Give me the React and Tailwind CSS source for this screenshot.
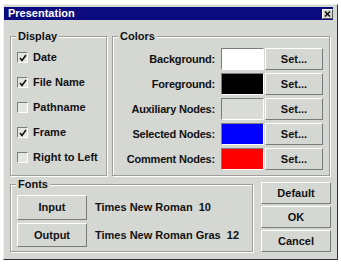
import React from "react";

const font = { fontFamily: '"Liberation Sans", Arial, sans-serif' };

function Check({ checked }) {
  return (
    <span className="w-[11px] h-[11px] bg-[#e4e6e2] border border-t-[#7c7c7c] border-l-[#7c7c7c] border-r-white border-b-white flex items-center justify-center">
      {checked && (
        <svg width="8" height="8" viewBox="0 0 8 8">
          <path d="M1 4 L3 6.5 L7 1" stroke="#111" strokeWidth="1.6" fill="none" />
        </svg>
      )}
    </span>
  );
}

function Btn({ children, className = "" }) {
  return (
    <button
      className={
        "bg-[#d5d7d3] border border-t-white border-l-white border-r-[#7a7a7a] border-b-[#7a7a7a] text-[11px] font-bold text-[#111] flex items-center justify-center " +
        className
      }
    >
      {children}
    </button>
  );
}

function Group({ label, className = "", children }) {
  return (
    <div
      className={
        "relative border border-[#9c9e9a] shadow-[1px_1px_0_#ffffff,inset_1px_1px_0_#ffffff] " +
        className
      }
    >
      <span className="absolute -top-[8px] left-[5px] px-[2px] bg-[#d5d7d3] text-[11px] font-bold text-[#111] leading-[14px]">
        {label}
      </span>
      {children}
    </div>
  );
}

export default function App() {
  const checks = [
    ["Date", true],
    ["File Name", true],
    ["Pathname", false],
    ["Frame", true],
    ["Right to Left", false],
  ];
  const colors = [
    ["Background:", "bg-white"],
    ["Foreground:", "bg-black"],
    ["Auxiliary Nodes:", "bg-[#d9dbd7]"],
    ["Selected Nodes:", "bg-[#0000ff]"],
    ["Comment Nodes:", "bg-[#ff0000]"],
  ];

  return (
    <div className="w-[341px] h-[264px] bg-white pt-[4px] pl-[3px]" style={font}>
      <div className="w-[335px] h-[256px] bg-[#d5d7d3] border border-t-[#eeeeee] border-l-[#eeeeee] border-r-[#303030] border-b-[#303030] flex flex-col">
        <div className="mt-[2px] w-[329px] h-[13px] bg-[#0b0a7e] flex items-center justify-between pl-[4px]">
          <span className="text-white text-[11px] font-bold leading-none">Presentation</span>
          <span className="w-[11px] h-[10px] bg-[#d5d7d3] border border-t-white border-l-white border-r-[#555] border-b-[#555] flex items-center justify-center">
            <svg width="7" height="6" viewBox="0 0 7 6">
              <path d="M1 0.5 L6 5.5 M6 0.5 L1 5.5" stroke="#111" strokeWidth="1.5" />
            </svg>
          </span>
        </div>

        <div className="flex gap-[5px] pl-[6px] mt-[16px]">
          <Group label="Display" className="w-[97px] h-[140px] pt-[8px] pl-[6px]">
            <div className="flex flex-col">
              {checks.map(([t, c]) => (
                <div key={t} className="h-[25px] flex items-center gap-[5px]">
                  <Check checked={c} />
                  <span className="text-[11px] font-bold text-[#111]">{t}</span>
                </div>
              ))}
            </div>
          </Group>
          <Group label="Colors" className="w-[218px] h-[140px] pt-[11px] pr-[6px]">
            <div className="flex flex-col gap-[3px]">
              {colors.map(([t, c]) => (
                <div key={t} className="h-[22px] flex items-center justify-end">
                  <span className="text-[11px] font-bold text-[#111] mr-[6px] tracking-[-0.2px]">{t}</span>
                  <span className={"w-[43px] h-[22px] border border-t-[#7c7c7c] border-l-[#7c7c7c] border-r-white border-b-white " + c} />
                  <Btn className="w-[58px] h-[22px] ml-[1px]">Set...</Btn>
                </div>
              ))}
            </div>
          </Group>
        </div>

        <div className="flex pl-[6px] mt-[6px] items-start">
          <Group label="Fonts" className="w-[243px] h-[68px] mt-[2px] pt-[10px] pl-[6px]">
            <div className="flex flex-col gap-[3px]">
              <div className="flex items-center">
                <Btn className="w-[70px] h-[25px]">Input</Btn>
                <span className="ml-[8px] text-[11px] font-bold text-[#111]">Times New Roman&nbsp;&nbsp;10</span>
              </div>
              <div className="flex items-center">
                <Btn className="w-[70px] h-[24px]">Output</Btn>
                <span className="ml-[8px] text-[11px] font-bold text-[#111]">Times New Roman Gras&nbsp;&nbsp;12</span>
              </div>
            </div>
          </Group>
          <div className="ml-[8px] flex flex-col gap-[2px]">
            <Btn className="w-[70px] h-[22px]">Default</Btn>
            <Btn className="w-[70px] h-[22px]">OK</Btn>
            <Btn className="w-[70px] h-[22px]">Cancel</Btn>
          </div>
        </div>
      </div>
    </div>
  );
}
